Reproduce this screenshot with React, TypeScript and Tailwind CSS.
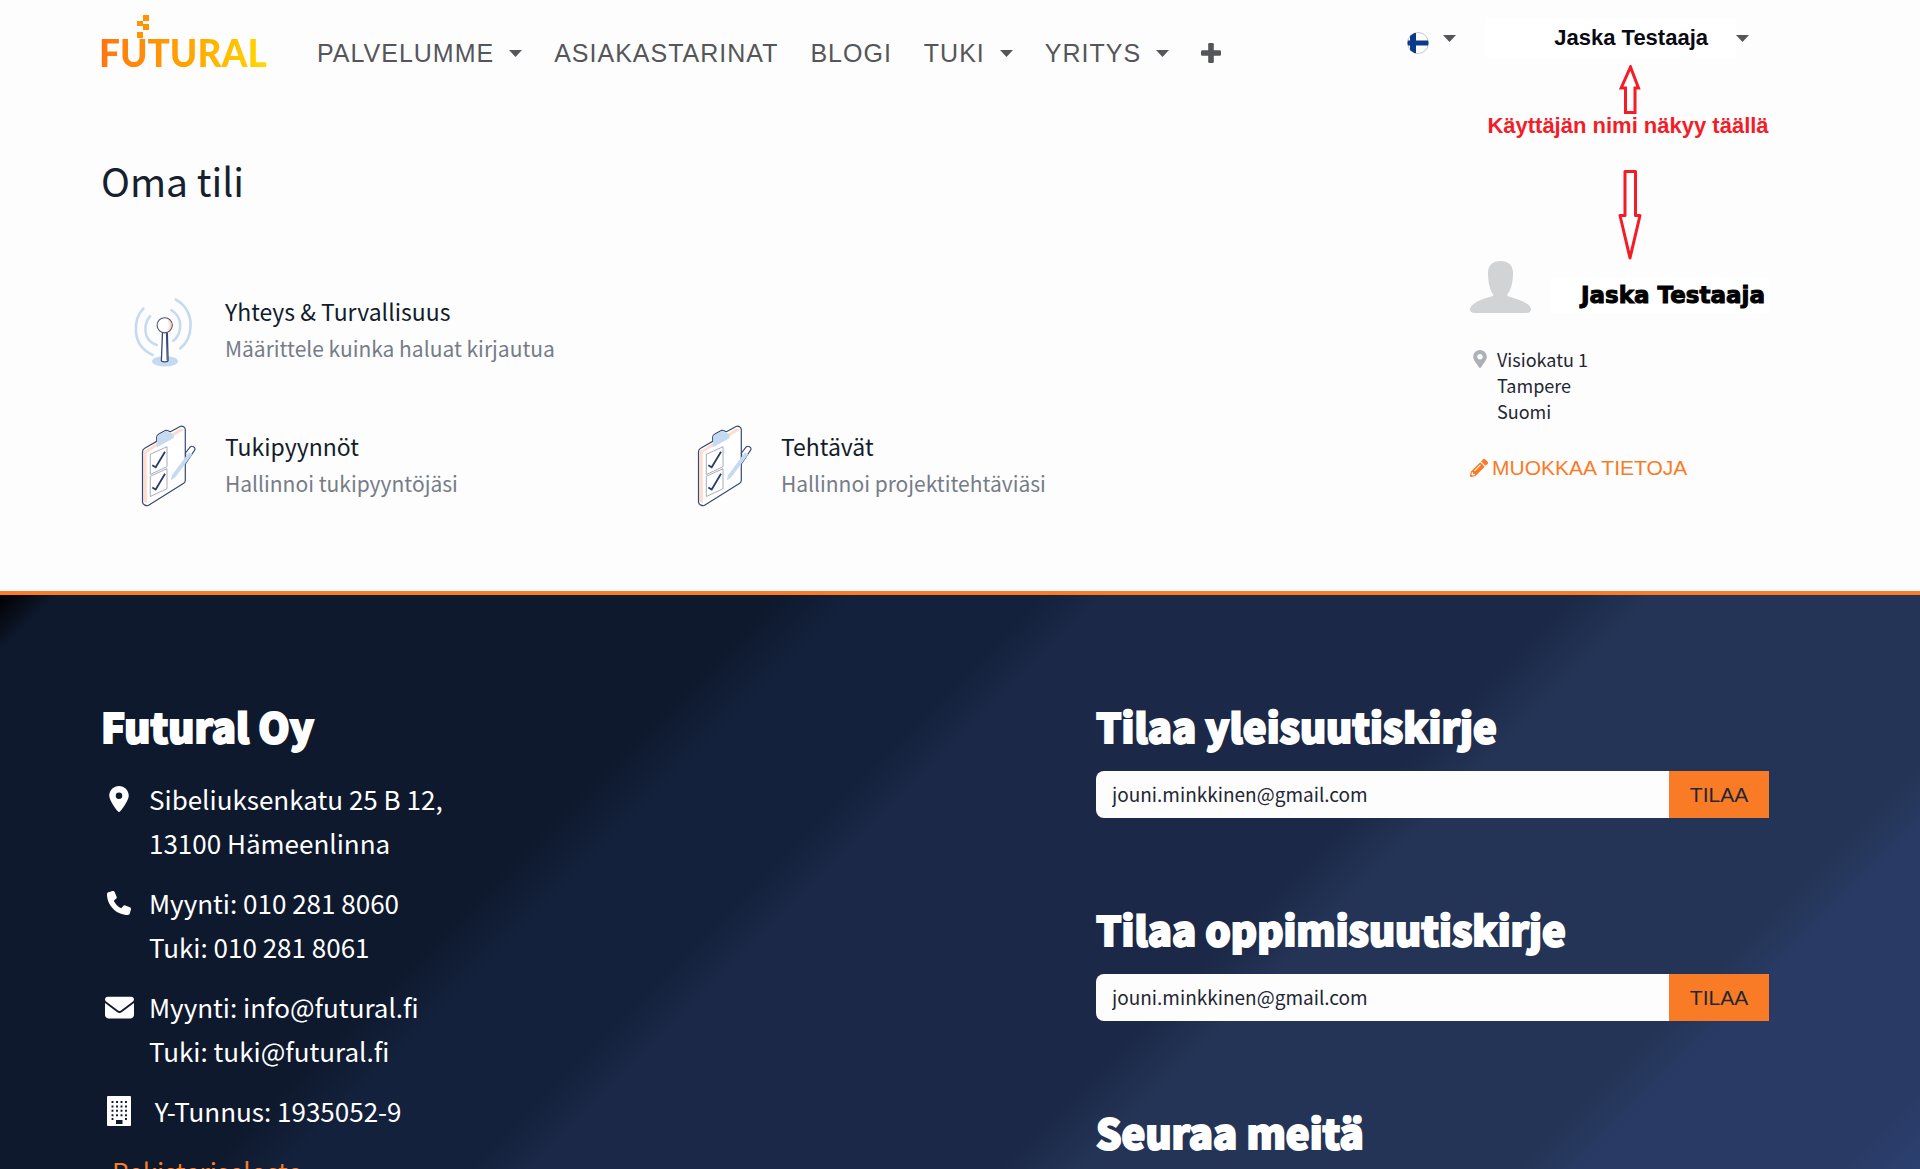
import React from 'react';
import { FaPencilAlt, FaMapMarkerAlt } from 'react-icons/fa';
import { FaPhone, FaEnvelope, FaLocationDot } from 'react-icons/fa6';

const Caret: React.FC = () => (
  <svg width="13" height="7" viewBox="0 0 13 7" fill="currentColor" aria-hidden="true">
    <path d="M0 0h13L6.500 7z" />
  </svg>
);

const PlusIcon: React.FC = () => (
  <svg width="20" height="20" viewBox="0 0 20 20" fill="currentColor" aria-hidden="true">
    <rect x="7.200" width="5.600" height="20" rx="1.300" />
    <rect y="7.200" width="20" height="5.600" rx="1.300" />
  </svg>
);

const Logo: React.FC = () => (
  <a href="#" className="relative block w-[172px]">
    <span className="block bg-linear-to-r from-[#ff7411] via-[#ffa200] to-[#ffdc00] bg-clip-text font-['Lato'] text-[37px] leading-10 font-black text-transparent">
      FUTURAL
    </span>
    {/* pixels flying out of the U */}
    <svg className="absolute -top-[18px] left-[38px]" width="12" height="24" viewBox="0 0 12 24" fill="#ff9400" aria-hidden="true">
      <path d="M6 0h6v6H6zM0 6h6v5H0zM6 9h6v6H6zM0 17h6v6H0z" />
    </svg>
  </a>
);

const FinnishFlag: React.FC = () => (
  <svg className="mt-2.5" width="22" height="22" viewBox="0 0 22 22" aria-hidden="true">
    <defs>
      <clipPath id="flag">
        <circle cx="11" cy="11" r="10.500" />
      </clipPath>
    </defs>
    <circle cx="11" cy="11" r="10.500" fill="#fff" stroke="#c4c6cc" />
    <g clipPath="url(#flag)" fill="#0b3a8c">
      <path d="M3 0h6v22H3zM0 8.500h22v5H0z" />
    </g>
  </svg>
);

const AntennaIcon: React.FC = () => (
  <svg width="72" height="84" viewBox="0 0 72 84" fill="none" className="shrink-0" aria-hidden="true">
    <ellipse cx="36" cy="73.300" rx="13" ry="5.300" fill="#c5daf0" />
    <g stroke="#c5daf0" strokeWidth="2.600" strokeLinecap="round">
      <path d="M14.300 20.700C9 26 6.500 34 6.900 43c.6 11.500 7 19.500 16.800 24" />
      <path d="M21 28.300c-3.600 4-5 9-4.500 15.200.6 6.500 4.800 11.300 11.200 13.500" />
      <path d="M46.700 11.700C56 16.500 61.700 26 61.600 37c-.1 10-4 18.500-10.300 23.300" />
      <path d="M42.300 22c5.600 3.500 8.900 9 8.900 15.500 0 6.800-2.700 12-6.900 15.200" />
    </g>
    <path d="M33.500 44h4.800l.8 28.500c0 1-1 1.300-3.300 1.300s-3.400-.3-3.400-1.300z" fill="#fff" stroke="#374874" strokeWidth="1.300" />
    <path d="M37.400 45l.7 27.500" stroke="#374874" />
    <circle cx="35.700" cy="37.300" r="7.600" fill="#fff" />
    <path d="M38 30.200a7.600 7.600 0 0 1 0 14.200c2.500-4 2.500-10 0-14.200z" fill="#ffdccb" />
    <circle cx="35.700" cy="37.300" r="7.600" stroke="#4b5470" strokeWidth="1.100" />
  </svg>
);

const ClipboardIcon: React.FC = () => (
  <svg width="72" height="84" viewBox="0 0 72 84" fill="none" className="shrink-0" aria-hidden="true">
    <path d="M13.500 29c0-1.700.6-2.900 2.200-3.700L50.500 3.700c2-1.200 5.800.6 5.800 3v50.800c0 1.400-.4 2-1.600 2.800L20 82c-2.400 1.500-6.500-.2-6.500-3z" fill="#fff" />
    <path d="M14.500 28.500l37-23.300 3.500 1.600L18 29.500v50.800l-3.500-1.800z" fill="#ffdccb" />
    <path d="M17.500 31L55 8v50L19 80.500l-1-.5z" fill="#fff" />
    <path d="M13.500 29c0-1.700.6-2.900 2.200-3.700l12-7V14c0-1.700 1-2.300 2.600-3.200l6.500-3.400c1.700-.8 3.400 1.600 4.600 1.300l9.700-5.200c2.300-1.200 5.200.8 5.200 3.200v50.800c0 1.400-.4 2-1.600 2.800L20 82c-2.400 1.500-6.500-.2-6.500-3z" stroke="#374874" strokeWidth="1.200" />
    <path d="M28.300 14.500c0-1.700.6-2.300 2-3l6-3.400c2.200-1 3.500 2 5.200 1.500l3.200 2.300v3.200L27.700 24.500l.6-5z" fill="#c5daf0" />
    <path d="M21.300 31.300L38 23.700v20L21.300 51.500zM21.300 53.300L38 45.700v20L21.300 73.500z" fill="#fff" stroke="#8f98ab" strokeWidth=".8" />
    <path d="M23.300 42.300l3.400 2L36 28.700M23.300 64.500l3.400 2L36 50.700" stroke="#2c3c68" strokeWidth="1.800" />
    <path d="M56.500 30l4.700-6c1.900-1.800 5.300.2 4.800 2.600L57 40z" fill="#fff" stroke="#374874" strokeWidth="1.200" />
    <path d="M41.800 57.500l1-5L60 29.200l3.200 2.400L46.500 54z" fill="#c5daf0" />
  </svg>
);

const BuildingIcon: React.FC = () => (
  <svg width="24" height="30" viewBox="0 0 24 30" aria-hidden="true">
    <rect width="24" height="30" rx="1" fill="#fff" />
    <path d="M5.500 5v16M10 5v16M14.500 5v16M19 5v16" stroke="#0e192d" strokeWidth="1.900" strokeDasharray="2 2.400" />
    <path d="M4.600 22h1.800v2H4.600zM18 22h1.900v2H18zM9 24h6.500v4H9z" fill="#0e192d" />
  </svg>
);

const Annotation: React.FC = () => (
  <div className="pointer-events-none absolute top-[65px] right-[151px] flex w-[282px] flex-col items-center font-['Liberation_Sans',sans-serif] text-[#f41c26]">
    <svg className="ml-1" width="22" height="49" viewBox="0 0 22 49" fill="#fff" stroke="currentColor" strokeWidth="3" aria-hidden="true">
      <path d="M6.500 47.500V23H2.200L11.500 2l8 21H16v24.500z" />
    </svg>
    <p className="text-[22px] leading-6 font-bold whitespace-nowrap">Käyttäjän nimi näkyy täällä</p>
    <svg className="mt-8 ml-1" width="24" height="90" viewBox="0 0 24 90" fill="#fff" stroke="currentColor" strokeWidth="3" strokeLinejoin="round" aria-hidden="true">
      <path d="M7 1.500h10.500v44H22L12 88 2 45.500h5z" />
    </svg>
  </div>
);

const Header: React.FC = () => (
  <header className="flex items-start justify-between pt-[17px] pr-[171px] pl-[99px] font-['Liberation_Sans',sans-serif] text-[#55565a]">
    <div className="mt-4 flex">
      <Logo />
      <nav className="ml-[46px] flex items-center gap-8 text-[25px] leading-10 tracking-[1px] whitespace-nowrap">
        <button className="flex items-center gap-[15px] tracking-[1px]">PALVELUMME <Caret /></button>
        <a href="#">ASIAKASTARINAT</a>
        <a href="#">BLOGI</a>
        <button className="flex items-center gap-[15px] tracking-[1px]">TUKI <Caret /></button>
        <button className="flex items-center gap-[15px] tracking-[1px]">YRITYS <Caret /></button>
        <button aria-label="Lisää"><PlusIcon /></button>
      </nav>
    </div>
    <div className="flex h-[42px] items-center">
      <button className="mr-[30px] flex items-center gap-[14px]" aria-label="Kieli">
        <FinnishFlag />
        <Caret />
      </button>
      <button className="flex items-center">
        <span className="bg-white pr-[28px] pl-[68px] text-[22px] leading-10 font-bold text-[#0a0a12]">Jaska Testaaja</span>
        <Caret />
      </button>
    </div>
  </header>
);

type CardProps = {
  icon: React.ReactNode;
  title: string;
  text: string;
  className?: string;
};

const Card: React.FC<CardProps> = ({ icon, title, text, className = '' }) => (
  <a href="#" className={`flex items-center gap-6 pl-7 whitespace-nowrap ${className}`}>
    {icon}
    <div>
      <h2 className="text-[23px] leading-[37px] text-[#121c2b]">{title}</h2>
      <p className="text-[21px] leading-[37px] text-[#757c88]">{text}</p>
    </div>
  </a>
);

const Profile: React.FC = () => (
  <aside className="w-[299px] justify-self-end pt-[109px]">
    <div className="flex items-end">
      <svg width="61" height="52" viewBox="0 0 61 52" fill="#d2d3d5" className="shrink-0" aria-hidden="true">
        <path d="M18 12C18 4 23 0 30.500 0S43 4 43 12c0 9-2 17-6 22 1 1.500 3 2 5 2.500 9 2.500 19 7 19 12 0 2-1.500 3.500-5 3.500H5c-3.500 0-5-1.500-5-3.500 0-5 9-9.500 18-12 2-.5 4-1 5.500-2.500C19.500 29 18 20 18 12z" />
      </svg>
      <p className="ml-5 grow bg-white pr-1 text-right font-['DejaVu_Sans',sans-serif] text-[23px] leading-9 font-bold whitespace-nowrap text-black [-webkit-text-stroke:1px_black]">
        Jaska Testaaja
      </p>
    </div>
    <div className="mt-[33px] flex gap-2 text-[18px] leading-[26px] text-[#1f2733]">
      <FaMapMarkerAlt size={18} className="mt-1 ml-px shrink-0 text-[#acb1b9]" />
      <address className="not-italic">
        Visiokatu 1<br />
        Tampere<br />
        Suomi
      </address>
    </div>
    <a href="#" className="mt-[29px] flex items-center gap-1 font-['Liberation_Sans',sans-serif] text-[21px] leading-[30px] whitespace-nowrap text-[#f97b25]">
      <FaPencilAlt size={18} />
      MUOKKAA TIETOJA
    </a>
  </aside>
);

const contacts = [
  { icon: <FaLocationDot size={26} />, lines: ['Sibeliuksenkatu 25 B 12,', '13100 Hämeenlinna'] },
  { icon: <FaPhone size={24} />, lines: ['Myynti: 010 281 8060', 'Tuki: 010 281 8061'] },
  { icon: <FaEnvelope size={29} />, lines: ['Myynti: info@futural.fi', 'Tuki: tuki@futural.fi'] },
  { icon: <BuildingIcon />, lines: ['\u00a0Y-Tunnus: 1935052-9'] },
];

const Heading: React.FC<{ children: React.ReactNode }> = ({ children }) => (
  <h3 className="text-[40px] leading-[58px] font-black whitespace-nowrap [-webkit-text-stroke:2px_white]">{children}</h3>
);

const Newsletter: React.FC<{ id: string; title: string }> = ({ id, title }) => (
  <form className="mb-[82px]" onSubmit={(e) => e.preventDefault()}>
    <label htmlFor={id}>
      <Heading>{title}</Heading>
    </label>
    <div className="mt-4 flex h-[47px]">
      <input
        id={id}
        type="email"
        defaultValue="jouni.minkkinen@gmail.com"
        className="min-w-0 grow rounded-l-lg bg-[#fdfdfd] px-4 text-[19px] text-[#1f2733] outline-none"
      />
      <button className="w-[100px] bg-[#f97b25] font-['Liberation_Sans',sans-serif] text-[21px] text-[#1f2733]">TILAA</button>
    </div>
  </form>
);

const Footer: React.FC = () => (
  <footer className="grow border-t-4 border-[#f97b25] bg-[linear-gradient(135deg,#000_0px,#0e192d_40px,#0e192d_550px,#14213c_605px,#14213c_735px,#1b2847_785px,#1b2847_1110px,#243456_1170px,#243456_1475px,#293b65_1525px,#293b65_1710px,#2c4070_1760px)] pt-[102px] pr-[151px] pl-[101px] text-white">
    <div className="grid grid-cols-[995fr_673fr]">
      <div>
        <Heading>Futural Oy</Heading>
        <ul className="mt-[22px] flex flex-col gap-4 text-[26px] leading-[44px]">
          {contacts.map((contact) => (
            <li key={contact.lines[0]} className="flex gap-3">
              <span className="flex h-11 w-9 shrink-0 items-center justify-center">{contact.icon}</span>
              <p>
                {contact.lines.map((line) => (
                  <span key={line} className="block">{line}</span>
                ))}
              </p>
            </li>
          ))}
          <li className="pl-[11px]">
            <a href="#" className="text-[#f97b25]">Rekisteriseloste</a>
          </li>
        </ul>
      </div>
      <div>
        <Newsletter id="general-newsletter" title="Tilaa yleisuutiskirje" />
        <Newsletter id="learning-newsletter" title="Tilaa oppimisuutiskirje" />
        <Heading>Seuraa meitä</Heading>
      </div>
    </div>
  </footer>
);

const App: React.FC = () => {
  return (
    <div className="relative flex h-screen flex-col overflow-hidden bg-[#fdfdfd] font-['Noto_Sans_CJK_SC',sans-serif]">
      <Header />
      <Annotation />
      <main className="grid grid-cols-3 pt-[79px] pr-[151px] pb-[84px] pl-[101px]">
        <div className="col-span-2">
          <h1 className="text-[39px] leading-[56px] text-[#16202f]">Oma tili</h1>
          <div className="mt-20 grid grid-cols-2 gap-y-[51px]">
            <Card className="col-span-2" icon={<AntennaIcon />} title="Yhteys & Turvallisuus" text="Määrittele kuinka haluat kirjautua" />
            <Card icon={<ClipboardIcon />} title="Tukipyynnöt" text="Hallinnoi tukipyyntöjäsi" />
            <Card icon={<ClipboardIcon />} title="Tehtävät" text="Hallinnoi projektitehtäviäsi" />
          </div>
        </div>
        <Profile />
      </main>
      <Footer />
    </div>
  );
};

export default App;
